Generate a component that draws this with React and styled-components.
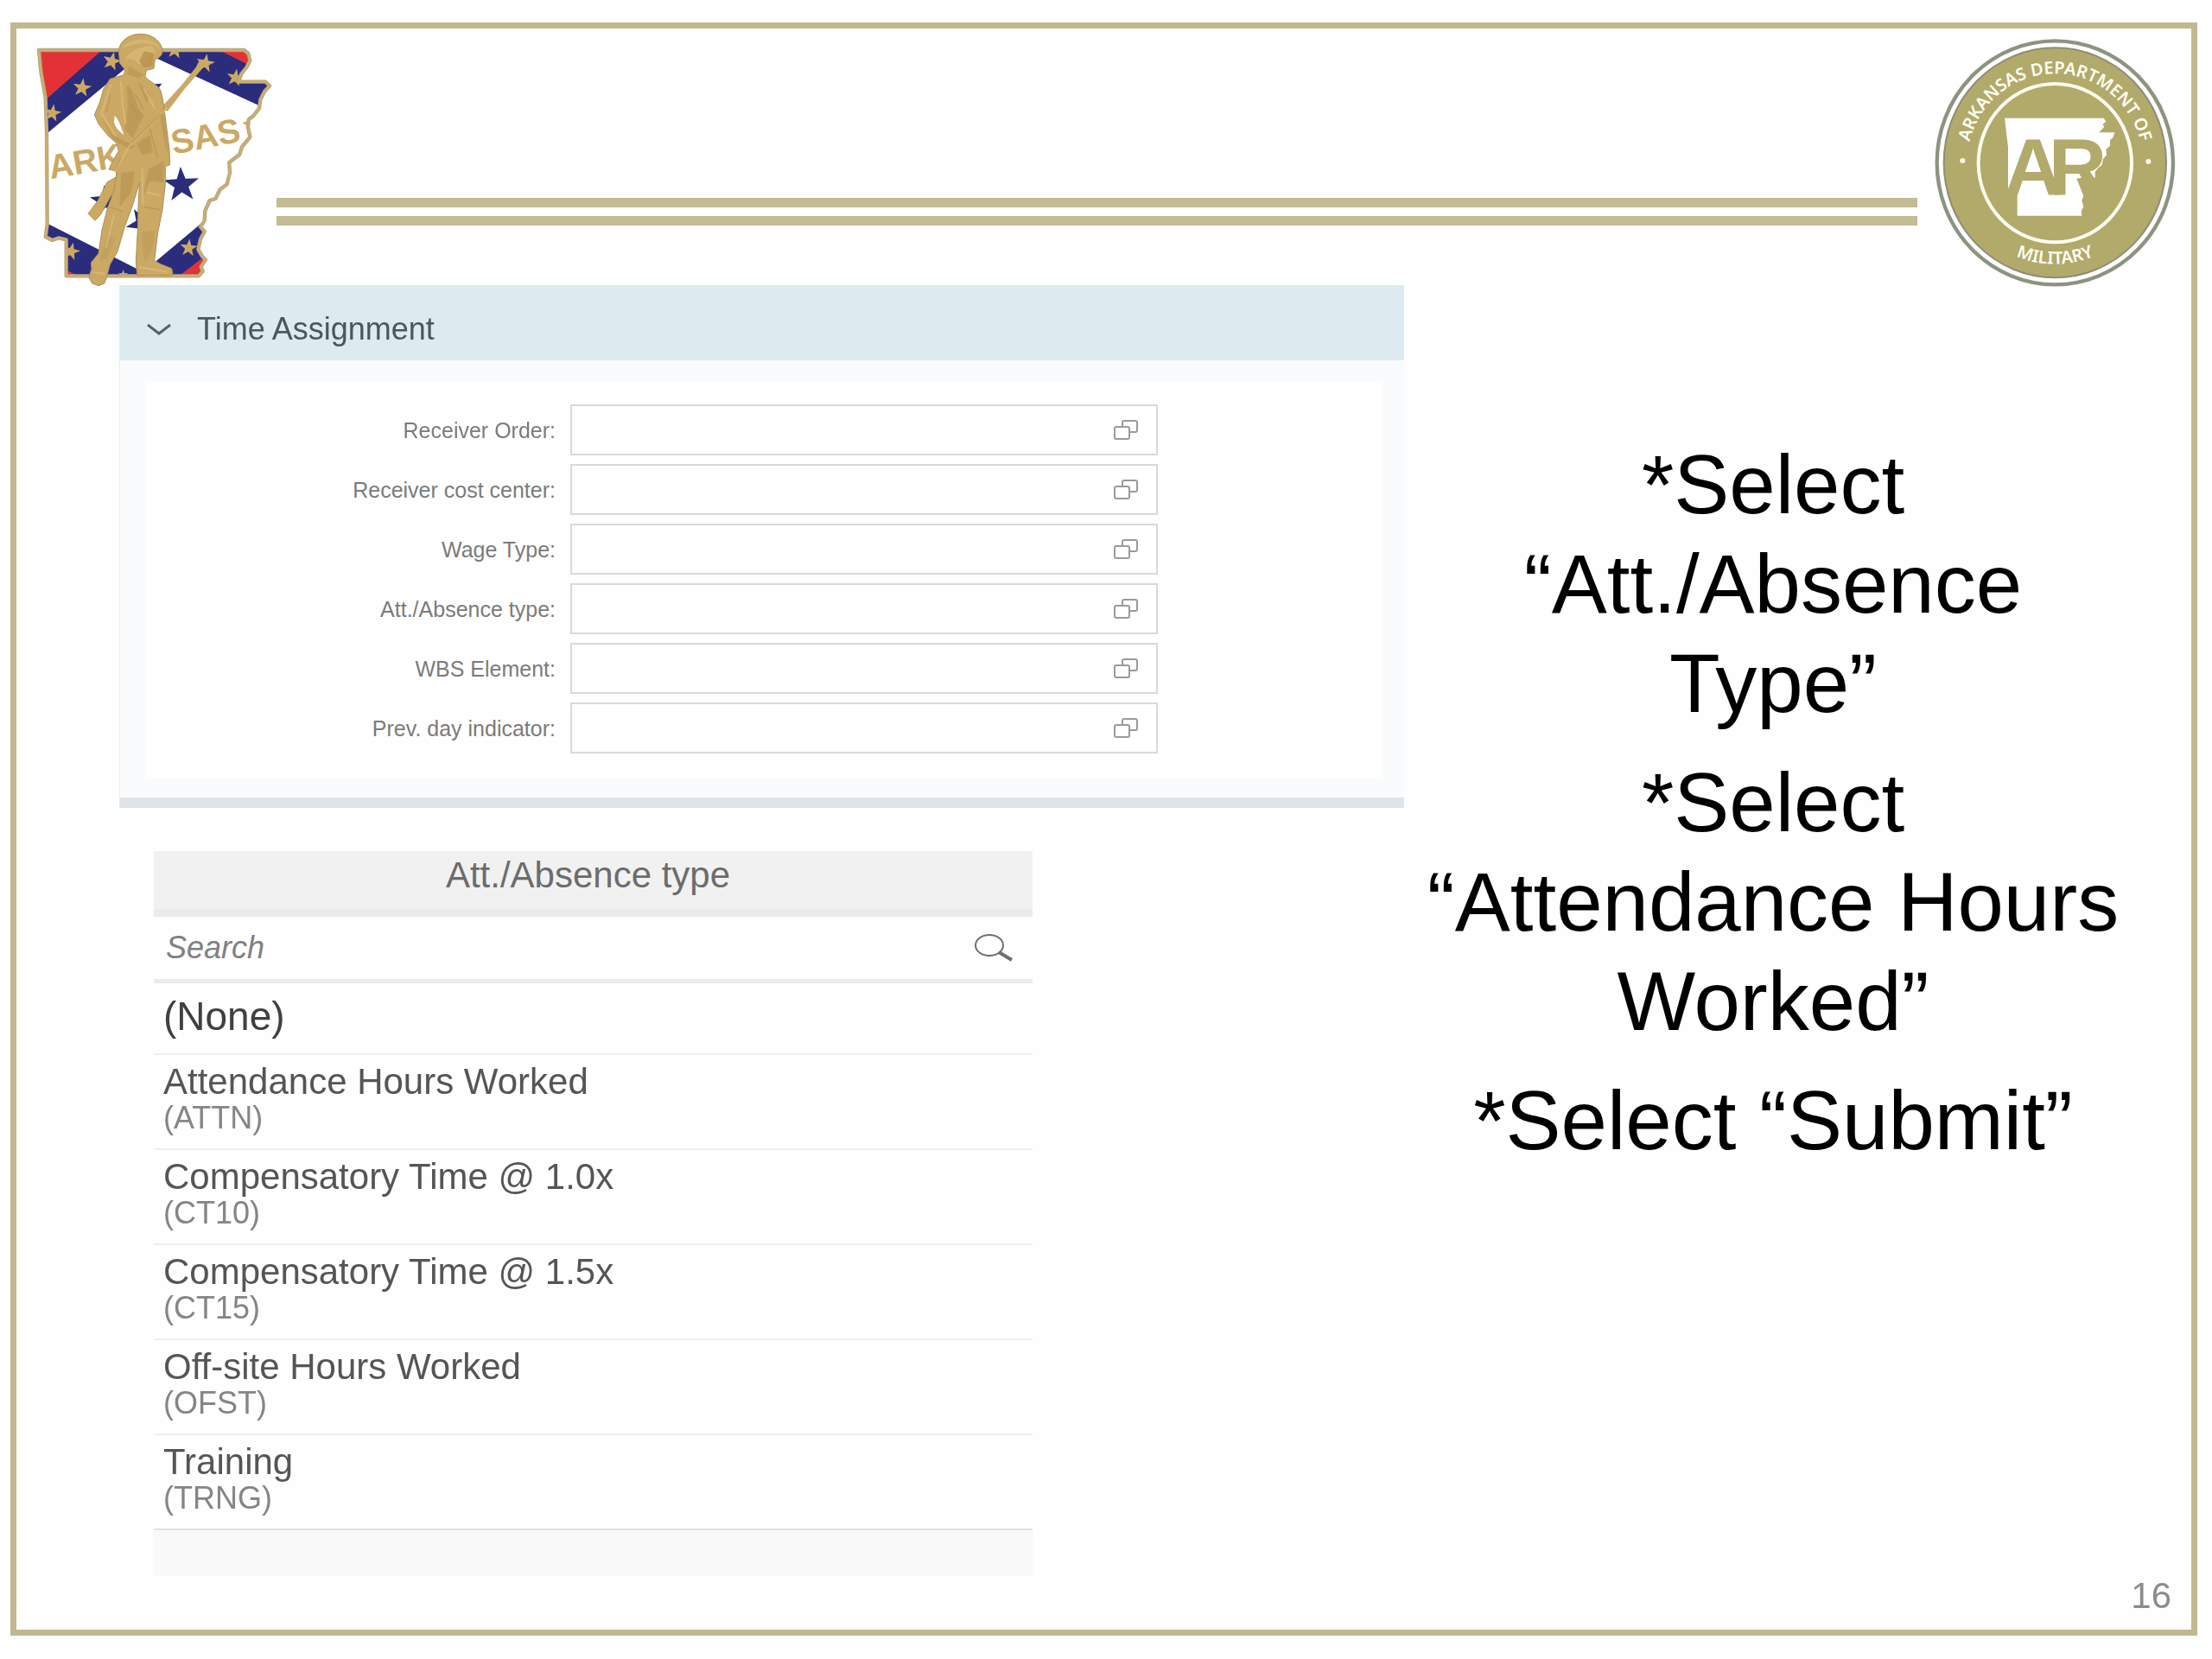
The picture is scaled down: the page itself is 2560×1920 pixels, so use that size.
import React from "react";
import styled, { createGlobalStyle } from "styled-components";

const GlobalStyle = createGlobalStyle`
  *, *::before, *::after { box-sizing: border-box; }
  body {
    margin: 0;
    background: #fefefe;
    font-family: "Liberation Sans", Arial, sans-serif;
    color: #000;
  }
  button, input { font-family: inherit; }
`;

const Slide = styled.div`
  display: flex;
  min-height: 100vh;
  padding: 26px 17px 27px 12px;
`;

const Frame = styled.div`
  flex: 1;
  display: flex;
  flex-direction: column;
  border: 7px solid #c0b990;
`;

const Header = styled.header`
  display: flex;
  align-items: flex-start;
  padding: 0 18px 0 21px;
`;

const StateLogo = styled.svg`
  flex: none;
  display: block;
  width: 277px;
  height: 297px;
  margin-top: 3px;
  margin-bottom: -3px;
`;

const Seal = styled.svg`
  flex: none;
  display: block;
  width: 279px;
  height: 287px;
  margin-top: 12px;
  margin-bottom: -2px;
`;

const DoubleRule = styled.div`
  flex: 1;
  height: 32px;
  margin: 196px 20px 0 3px;
  border-top: 11px solid #c2bb93;
  border-bottom: 11px solid #c2bb93;
`;

const Main = styled.main`
  display: grid;
  grid-template-columns: 1487fr 820fr;
  column-gap: 17px;
  padding: 0 74px 0 119px;
`;

const Column = styled.div`
  display: flex;
  flex-direction: column;
  gap: 50px;
`;

const Panel = styled.section`
  background: #f9fbfc;
  border-left: 1px solid #e6eef2;
  border-bottom: 12px solid #dfe4e8;
`;

const PanelHeader = styled.button`
  display: flex;
  align-items: center;
  gap: 30px;
  width: 100%;
  height: 87px;
  padding: 14px 31px 0;
  border: 0;
  background: #dcebef;
  color: #4c565b;
  font-size: 36px;
  line-height: 40px;
  text-align: left;
`;

const Chevron = styled.svg`
  width: 28px;
  height: 14px;
`;

const Form = styled.form`
  display: flex;
  flex-direction: column;
  gap: 10px;
  margin: 25px 25px 23px 29px;
  padding: 26px 0 28px;
  background: #fefefe;
`;

const Field = styled.div`
  display: grid;
  grid-template-columns: 475fr 680fr 243fr;
  column-gap: 17px;
  align-items: center;
`;

const Label = styled.label`
  color: #7b7b7b;
  font-size: 25px;
  line-height: 28px;
  text-align: right;
`;

const InputBox = styled.div`
  display: flex;
  align-items: center;
  height: 59px;
  padding-right: 21px;
  border: 2px solid #d9d9d9;
  background: #fff;
`;

const TextInput = styled.input`
  flex: 1;
  min-width: 0;
  height: 100%;
  padding: 0 12px;
  border: 0;
  background: none;
  font-size: 25px;
`;

const IconButton = styled.button`
  display: flex;
  padding: 0;
  border: 0;
  background: none;
`;

const HelpIcon = styled.svg`
  width: 28px;
  height: 23px;
`;

const Picker = styled.section`
  width: 100%;
  max-width: 1017px;
  margin-left: 40px;
`;

const PickerTitle = styled.h2`
  height: 76px;
  margin: 0;
  padding: 6px 12px 0 0;
  border-bottom: 9px solid #ebebeb;
  background: #f1f1f1;
  color: #6c6c6c;
  font-size: 42px;
  font-weight: 400;
  line-height: 44px;
  text-align: center;
`;

const SearchRow = styled.div`
  display: flex;
  align-items: center;
  height: 77px;
  padding-right: 22px;
  border-bottom: 5px solid #ebebeb;
`;

const SearchInput = styled.input`
  flex: 1;
  min-width: 0;
  padding: 0 14px;
  border: 0;
  background: none;
  font-size: 36px;
  line-height: 44px;
  &::placeholder {
    color: #808080;
    font-style: italic;
    opacity: 1;
  }
`;

const SearchIcon = styled.svg`
  width: 46px;
  height: 32px;
`;

const Options = styled.ul`
  margin: 0;
  padding: 0;
  list-style: none;
`;

const OptionItem = styled.li`
  border-bottom: 2px solid ${(p) => (p.$last ? "#e2e2e2" : "#efefef")};
`;

const Option = styled.button`
  display: block;
  width: 100%;
  height: ${(p) => (p.$plain ? 81 : 108)}px;
  padding: 0 11px 6px;
  border: 0;
  background: none;
  text-align: left;
`;

const OptionName = styled.span`
  display: block;
  color: ${(p) => (p.$plain ? "#404040" : "#555")};
  font-size: ${(p) => (p.$plain ? 46 : 42)}px;
  line-height: 44px;
`;

const OptionCode = styled.span`
  display: block;
  color: #858585;
  font-size: 36px;
  line-height: 40px;
`;

const PickerFooter = styled.div`
  height: 53px;
  background: #f9f9f9;
`;

const Instructions = styled.div`
  display: flex;
  flex-direction: column;
  gap: 23px;
  padding-top: 173px;
  font-size: 96px;
  line-height: 115px;
  text-align: center;
`;

const Step = styled.p`
  margin: 0;
`;

const PageNumber = styled.footer`
  margin-top: auto;
  padding: 0 23px 18px;
  color: #8c8c8c;
  font-size: 42px;
  line-height: 42px;
  text-align: right;
`;

const fields = [
  ["order", "Receiver Order:"],
  ["center", "Receiver cost center:"],
  ["wage", "Wage Type:"],
  ["absence", "Att./Absence type:"],
  ["wbs", "WBS Element:"],
  ["prev", "Prev. day indicator:"],
];

const options = [
  ["(None)", null],
  ["Attendance Hours Worked", "(ATTN)"],
  ["Compensatory Time @ 1.0x", "(CT10)"],
  ["Compensatory Time @ 1.5x", "(CT15)"],
  ["Off-site Hours Worked", "(OFST)"],
  ["Training", "(TRNG)"],
];

function Star({ x, y, r, fill, turn = 0 }) {
  const points = Array.from({ length: 10 }, (_, i) => {
    const radius = i % 2 ? r * 0.4 : r;
    const a = ((i * 36 - 90 + turn) * Math.PI) / 180;
    return `${(x + radius * Math.cos(a)).toFixed(1)},${(y + radius * Math.sin(a)).toFixed(1)}`;
  }).join(" ");
  return <polygon points={points} fill={fill} />;
}

const STATE =
  "M135 146 H848 L862 158 L868 182 L856 206 L838 228 L828 256 H922 L936 270 L918 290 L904 318 L900 348 L880 374 L864 386 L860 408 L868 448 L840 482 L832 508 L796 536 L798 572 L788 612 L764 630 L748 662 L728 668 L712 704 L710 738 L696 760 L710 776 L696 802 L688 838 L702 862 L714 874 L698 898 L704 914 L690 930 H230 V804 L204 798 L182 806 L158 794 L164 752 L162 430 L158 312 L142 220 Z";

function MinutemanLogo() {
  const gold = "#cba964";
  const dark = "#b5924f";
  const light = "#dcbd7e";
  const navy = "#2b2c7c";
  return (
    <StateLogo viewBox="120 80 831 891" role="img" aria-label="Arkansas National Guard">
      <defs>
        <clipPath id="stateClip">
          <path d={STATE} />
        </clipPath>
      </defs>
      <g clipPath="url(#stateClip)">
        <rect x="120" y="130" width="840" height="820" fill="#e23237" />
        <polygon
          points="0,457 350,150 500,15 765,148 1100,316 1100,540 700,870 635,920 520,1010 255,922 0,790"
          fill={navy}
        />
        <polygon points="501,155 1085,424 497,916 0,665 0,571" fill="#fff" />
        <Star x={388} y={185} r={34} fill={gold} turn={14} />
        <Star x={285} y={277} r={34} fill={gold} turn={8} />
        <Star x={182} y={365} r={32} fill={gold} turn={10} />
        <Star x={608} y={146} r={32} fill={gold} turn={8} />
        <Star x={713} y={192} r={34} fill={gold} turn={10} />
        <Star x={817} y={242} r={32} fill={gold} turn={10} />
        <Star x={247} y={845} r={32} fill={gold} turn={14} />
        <Star x={655} y={833} r={32} fill={gold} turn={6} />
        <Star x={428} y={926} r={18} fill={gold} />
      </g>
      <path d={STATE} fill="none" stroke="#a9a290" strokeWidth="13" strokeLinejoin="round" />
      <path d={STATE} fill="none" stroke="#d0ae68" strokeWidth="8" strokeLinejoin="round" />
      <Star x={630} y={614} r={64} fill={navy} turn={-3} />
      <Star x={366} y={670} r={56} fill={navy} turn={-4} />
      <Star x={494} y={748} r={58} fill={navy} turn={-30} />
      <path d="M536 264 L562 262 L552 276 L560 296 Z" fill={navy} />
      <g fill={gold} fontFamily="Liberation Sans, Arial, sans-serif" fontWeight="700" fontSize="118">
        <text x="176" y="594" transform="rotate(-10 176 594)">ARK</text>
        <text x="602" y="508" transform="rotate(-11 602 508)">SAS</text>
      </g>
      <path d="M846 402 Q860 392 866 408" fill="none" stroke={gold} strokeWidth="9" />
      <path d="M692 182 L708 204 L640 282 L582 358 L560 352 L566 338 L630 268 L680 206 Z" fill={gold} />
      <path d="M372 604 L412 582 L392 640 L350 716 L330 738 L306 714 L340 668 Z" fill={gold} stroke={dark} strokeWidth="3" />
      <path
        d="M412 152 C414 112 450 90 490 90 C530 90 562 118 564 148 C564 164 552 174 538 178 L534 210 L508 216 L504 238 C520 258 548 264 558 288 C568 320 570 356 576 396 L588 490 L590 544 L574 550 L574 610 L564 700 L548 780 L536 876 L556 888 L596 904 L600 922 L590 928 H476 L472 880 L478 770 L480 690 L484 606 L462 680 L432 762 L408 846 L382 890 L370 936 L362 956 L342 964 L320 956 L308 934 L318 906 L316 884 L342 852 L354 770 L374 692 L394 640 L402 598 L404 566 L378 560 L392 530 L412 496 L404 468 L376 444 L342 402 L328 370 L346 328 L360 280 L382 246 L430 232 L434 214 L416 192 Z"
        fill={gold}
        stroke="#a98f5c"
        strokeWidth="3"
        strokeLinejoin="round"
      />
      <path d="M398 374 C414 388 420 414 430 440 C414 428 398 412 396 394 Z" fill="#fff" />
      <path d="M424 140 C440 102 540 96 556 140 C530 116 466 118 424 140 Z" fill={light} opacity=".6" />
      <path d="M434 176 C458 142 500 132 530 132 L542 158 L516 152 L510 180 L484 196 L466 180 Z" fill={light} opacity=".6" />
      <path d="M500 150 L534 158 L530 202 L498 206 L484 184 Z" fill={dark} opacity=".8" />
      <path d="M448 202 L500 232 L478 242 L440 230 Z" fill={dark} opacity=".6" />
      <g fill={dark} opacity=".6">
        <path d="M440 268 C470 280 470 350 500 372 L460 452 L432 420 L444 340 Z" />
        <path d="M478 254 L520 300 L508 330 Z" />
        <path d="M566 340 L576 420 L586 520 L572 470 L556 380 Z" />
        <path d="M350 372 L390 440 L470 480 L452 490 L392 458 Z" />
        <path d="M420 572 L468 566 L456 640 L416 690 Z" />
        <path d="M516 560 L570 530 L566 606 L520 600 L494 660 Z" />
        <path d="M474 470 L520 440 L530 500 L492 512 Z" />
        <path d="M372 790 L398 800 L372 870 L344 880 Z" opacity=".5" />
        <path d="M490 780 L540 770 L528 850 L500 880 Z" opacity=".5" />
      </g>
      <g fill="none" stroke={light} strokeWidth="7" strokeLinecap="round" opacity=".65">
        <path d="M578 348 L450 478 L398 566" />
        <path d="M420 256 L426 340 L436 400" />
        <path d="M384 266 L352 366 L400 440" />
        <path d="M500 280 L536 346" />
        <path d="M494 560 L496 680" />
        <path d="M396 720 L368 830" />
        <path d="M512 640 L554 650" />
        <path d="M484 900 L580 916" />
        <path d="M326 918 L362 922" />
      </g>
      <g fill="none" stroke={dark} strokeWidth="5" opacity=".65">
        <path d="M456 468 L560 366" />
        <path d="M470 300 L498 350 M452 330 L482 384" />
        <path d="M380 690 L424 706 M500 690 L556 700" />
        <path d="M384 300 L370 360" />
        <path d="M420 520 L400 560" />
        <path d="M520 420 L548 520" />
      </g>
    </StateLogo>
  );
}

function MilitarySeal() {
  const khaki = "#b1aa6b";
  return (
    <Seal viewBox="117 105 837 861" role="img" aria-label="Arkansas Department of Military">
      <defs>
        <path id="sealTop" d="M230 535 A305 309 0 0 1 840 535" />
        <path id="sealBottom" d="M186 535 A349 352 0 0 0 884 535" />
      </defs>
      <ellipse cx="535" cy="535" rx="410" ry="423" fill="#fff" stroke="#8c9481" strokeWidth="13" />
      <ellipse cx="535" cy="535" rx="386" ry="399" fill={khaki} stroke="#8f8d75" strokeWidth="6" />
      <ellipse cx="535" cy="536" rx="266" ry="275" fill="none" stroke="#fffdf2" strokeWidth="12" />
      <path
        d="M360 380 H704 L712 392 L700 402 L706 410 L688 430 H742 L736 448 L726 456 L726 476 L712 488 L714 508 L702 522 L698 542 L684 554 L674 566 L674 586 L656 600 L640 584 L610 590 L634 650 L628 666 L634 688 L626 702 L628 719 H404 V640 L372 628 L372 480 Z"
        fill="#fff"
      />
      <text
        x="358"
        y="646"
        dx="0 -48"
        fill={khaki}
        fontFamily="Liberation Sans, Arial, sans-serif"
        fontWeight="700"
        fontSize="280"
      >
        AR
      </text>
      <g fill="#fffdf2" fontFamily="Noto Sans, sans-serif" fontWeight="600" fontSize="60" textAnchor="middle">
        <text>
          <textPath href="#sealTop" startOffset="50%">ARKANSAS DEPARTMENT OF</textPath>
        </text>
        <text>
          <textPath href="#sealBottom" startOffset="50%">MILITARY</textPath>
        </text>
      </g>
      <circle cx="214" cy="528" r="9" fill="#fffdf2" />
      <circle cx="859" cy="531" r="9" fill="#fffdf2" />
    </Seal>
  );
}

function ValueHelp() {
  return (
    <HelpIcon viewBox="0 0 28 23" fill="none" stroke="#9a9a9a" strokeWidth="2" aria-hidden="true">
      <path d="M10 8 V3 Q10 1 12 1 H25 Q27 1 27 3 V12 Q27 14 25 14 H19" />
      <rect x="1" y="8" width="17" height="14" rx="2" />
    </HelpIcon>
  );
}

export default function App() {
  return (
    <>
      <GlobalStyle />
      <Slide>
        <Frame>
          <Header>
            <MinutemanLogo />
            <DoubleRule />
            <MilitarySeal />
          </Header>
          <Main>
            <Column>
              <Panel>
                <PanelHeader type="button" aria-expanded="true">
                  <Chevron viewBox="0 0 28 14" fill="none" stroke="#56646a" strokeWidth="3" aria-hidden="true">
                    <path d="M1 2 L14 12 L27 2" />
                  </Chevron>
                  Time Assignment
                </PanelHeader>
                <Form>
                  {fields.map(([id, label]) => (
                    <Field key={id}>
                      <Label htmlFor={id}>{label}</Label>
                      <InputBox>
                        <TextInput id={id} type="text" />
                        <IconButton type="button" aria-label="Open value help">
                          <ValueHelp />
                        </IconButton>
                      </InputBox>
                    </Field>
                  ))}
                </Form>
              </Panel>
              <Picker>
                <PickerTitle>Att./Absence type</PickerTitle>
                <SearchRow>
                  <SearchInput type="text" placeholder="Search" aria-label="Search" />
                  <IconButton type="button" aria-label="Search">
                    <SearchIcon viewBox="0 0 46 32" fill="none" stroke="#6e6e6e" aria-hidden="true">
                      <ellipse cx="18" cy="13" rx="16" ry="12" strokeWidth="2" />
                      <path d="M29 21 L44 30" strokeWidth="4" />
                    </SearchIcon>
                  </IconButton>
                </SearchRow>
                <Options>
                  {options.map(([name, code], i) => (
                    <OptionItem key={name} $last={i === options.length - 1}>
                      <Option type="button" $plain={!code}>
                        <OptionName $plain={!code}>{name}</OptionName>
                        {code && <OptionCode>{code}</OptionCode>}
                      </Option>
                    </OptionItem>
                  ))}
                </Options>
                <PickerFooter />
              </Picker>
            </Column>
            <Instructions>
              <Step>*Select “Att./Absence Type”</Step>
              <Step>*Select “Attendance Hours Worked”</Step>
              <Step>*Select “Submit”</Step>
            </Instructions>
          </Main>
          <PageNumber>16</PageNumber>
        </Frame>
      </Slide>
    </>
  );
}
